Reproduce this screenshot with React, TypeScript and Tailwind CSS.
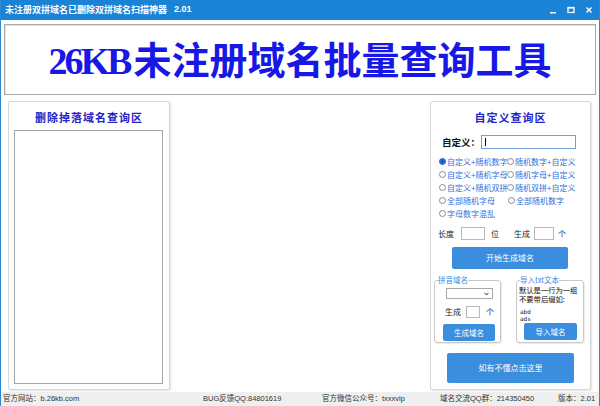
import React from "react";

const Radio: React.FC<{ checked?: boolean }> = ({ checked }) => (
  <span
    className={
      checked
        ? "w-[7px] h-[7px] shrink-0 rounded-full border border-[#2a62c9] bg-[#2f6fe0] flex items-center justify-center"
        : "w-[7px] h-[7px] shrink-0 rounded-full border border-[#8c8c8c] bg-white"
    }
  >
    {checked && <span className="w-[3px] h-[3px] rounded-full bg-[#1c4fb8]"></span>}
  </span>
);

const RadioItem: React.FC<{ label: string; checked?: boolean; className?: string }> = ({ label, checked, className }) => (
  <div className={"flex items-center gap-[1px] " + (className ?? "")}>
    <Radio checked={checked} />
    <span className="text-[8px] leading-[13px] text-[#2f6fe0] whitespace-nowrap">{label}</span>
  </div>
);

const App: React.FC = () => {
  return (
    <div className="w-[600px] h-[406px] flex flex-col border-x border-[#2a8ad8] bg-white overflow-hidden font-['Noto_Sans_CJK_SC',sans-serif]">
      {/* title bar */}
      <div className="h-[20px] shrink-0 bg-[#1b83d6] flex items-center pl-[4px] pr-[6px] text-white">
        <span className="text-[9px] font-bold whitespace-nowrap">未注册双拼域名已删除双拼域名扫描神器</span>
        <span className="ml-[7px] text-[9px] font-bold font-['Liberation_Sans',sans-serif]">2.01</span>
        <div className="ml-auto flex items-center gap-[10px]">
          <svg width="8" height="8" viewBox="0 0 8 8">
            <rect x="1" y="6" width="6" height="1.5" fill="white" />
          </svg>
          <svg width="8" height="8" viewBox="0 0 8 8">
            <rect x="1" y="1.5" width="6" height="5" fill="none" stroke="white" strokeWidth="1.3" />
            <rect x="1" y="1" width="6" height="1.5" fill="white" />
          </svg>
          <svg width="8" height="8" viewBox="0 0 8 8">
            <path d="M1.5 1.5 L6.5 6.5 M6.5 1.5 L1.5 6.5" stroke="white" strokeWidth="1.4" />
          </svg>
        </div>
      </div>

      {/* header */}
      <div className="mt-[4px] mx-[3px] h-[71px] shrink-0 border border-[#a9a9a9] shadow-[inset_1px_1px_0_#e4e4e4] flex items-center justify-center">
        <h1 className="text-[#1717e6] whitespace-nowrap flex items-baseline">
          <span className="text-[38px] tracking-[-3px] mr-[4px] font-bold font-['Liberation_Serif',serif]">26KB</span>
          <span className="text-[38px] font-semibold font-['Noto_Sans_CJK_SC',serif]">未注册域名批量查询工具</span>
        </h1>
      </div>

      {/* panels */}
      <div className="mt-[6px] h-[289px] shrink-0 flex justify-between pl-[7px] pr-[8px]">
        {/* left panel */}
        <div className="w-[162px] h-full border border-[#d6d6d6] rounded-[2px] shadow-[1px_1px_2px_rgba(0,0,0,0.12)] flex flex-col">
          <div className="h-[28px] pt-[3px] flex items-center justify-center">
            <span className="text-[11px] font-bold text-[#2323c8] tracking-[1px]">删除掉落域名查询区</span>
          </div>
          <div className="flex-1 ml-[5px] mr-[6px] mb-[5px] border border-[#a4a4a4]"></div>
        </div>

        {/* right panel */}
        <div className="w-[161px] h-full border border-[#d6d6d6] rounded-[2px] shadow-[1px_1px_2px_rgba(0,0,0,0.12)] flex flex-col">
          <div className="h-[28px] pt-[3px] flex items-center justify-center">
            <span className="text-[11px] font-bold text-[#2323c8] tracking-[1px]">自定义查询区</span>
          </div>

          <div className="mt-[5px] h-[14px] flex items-center pl-[11px]">
            <span className="w-[39px] text-[9.5px] font-bold text-[#111] whitespace-nowrap">自定义：</span>
            <div className="w-[95px] h-[14px] border border-[#6f9fd8] flex items-center pl-[3px]">
              <span className="w-[1px] h-[8px] bg-black"></span>
            </div>
          </div>

          <div className="mt-[6px] pl-[8px] flex flex-col">
            <div className="flex h-[13px]">
              <RadioItem checked label="自定义+随机数字" className="w-[68px]" />
              <RadioItem label="随机数字+自定义" />
            </div>
            <div className="flex h-[13px]">
              <RadioItem label="自定义+随机字母" className="w-[68px]" />
              <RadioItem label="随机字母+自定义" />
            </div>
            <div className="flex h-[13px]">
              <RadioItem label="自定义+随机双拼" className="w-[68px]" />
              <RadioItem label="随机双拼+自定义" />
            </div>
            <div className="flex h-[13px]">
              <RadioItem label="全部随机字母" className="w-[69px]" />
              <RadioItem label="全部随机数字" />
            </div>
            <div className="flex h-[13px]">
              <RadioItem label="字母数字混乱" />
            </div>
          </div>

          <div className="mt-[7px] h-[13px] flex items-center pl-[7px] text-[8px] text-[#222]">
            <span>长度</span>
            <span className="ml-[7px] w-[24px] h-[13px] border border-[#b8b8b8]"></span>
            <span className="ml-[6px]">位</span>
            <span className="ml-[15px]">生成</span>
            <span className="ml-[4px] w-[20px] h-[13px] border border-[#b8b8b8]"></span>
            <span className="ml-[4px]">个</span>
          </div>

          <button className="mt-[7px] ml-[21px] w-[116px] h-[22px] bg-[#3b8ede] rounded-[2px] text-white text-[8px] flex items-center justify-center">
            开始生成域名
          </button>

          <div className="mt-[6px] h-[68px] flex pl-[3px] gap-[15px]">
            <fieldset className="w-[67px] h-full border border-[#c8c8c8] rounded-[3px] shadow-[1px_1px_1px_rgba(0,0,0,0.08)] flex flex-col">
              <legend className="ml-[3px] text-[7.5px] leading-[10px] text-[#3b8ae0]">拼音域名</legend>
              <div className="mt-[3px] ml-[11px] w-[47px] h-[11px] border border-[#a8a8a8] flex items-center justify-end pr-[3px]">
                <svg width="5" height="4" viewBox="0 0 5 4">
                  <path d="M0.5 0.8 L2.5 3 L4.5 0.8" fill="none" stroke="#333" strokeWidth="1" />
                </svg>
              </div>
              <div className="mt-[7px] ml-[10px] h-[12px] flex items-center text-[8px] text-[#222]">
                <span>生成</span>
                <span className="ml-[5px] w-[14px] h-[12px] border border-[#b8b8b8]"></span>
                <span className="ml-[6px]">个</span>
              </div>
              <button className="mt-[6px] ml-[8px] w-[52px] h-[17px] bg-[#3b8ede] rounded-[2px] text-white text-[7.5px] flex items-center justify-center">
                生成域名
              </button>
            </fieldset>

            <fieldset className="w-[68px] h-full border border-[#c8c8c8] rounded-[3px] shadow-[1px_1px_1px_rgba(0,0,0,0.08)] flex flex-col">
              <legend className="ml-[3px] text-[7.5px] leading-[10px] text-[#3b8ae0] whitespace-nowrap">导入txt文本</legend>
              <div className="mt-[1px] ml-[2px] text-[7.3px] leading-[9px] text-[#111] whitespace-nowrap">
                <div>默认是一行为一组</div>
                <div>不要带后缀如:</div>
              </div>
              <div className="mt-[4px] ml-[3px] text-[6px] leading-[7px] text-[#222] font-['DejaVu_Sans_Mono',monospace]">
                <div>abd</div>
                <div>ads</div>
              </div>
              <button className="mt-[1px] ml-[7px] w-[53px] h-[17px] bg-[#3b8ede] rounded-[2px] text-white text-[7.5px] flex items-center justify-center">
                导入域名
              </button>
            </fieldset>
          </div>

          <button className="mt-[10px] ml-[16px] w-[127px] h-[30px] bg-[#3b8ede] rounded-[2px] text-white text-[8px] flex items-center justify-center">
            如有不懂点击这里
          </button>
        </div>
      </div>

      {/* status bar */}
      <div className="mt-auto h-[14px] bg-[#efefef] flex items-center text-[7.5px] text-[#333] whitespace-nowrap font-['Liberation_Sans','Noto_Sans_CJK_SC',sans-serif]">
        <span className="ml-[2px] w-[200px]">官方网站：b.26kb.com</span>
        <span className="w-[119px]">BUG反馈QQ:84801619</span>
        <span className="w-[118px]">官方微信公众号：txxxvip</span>
        <span className="w-[118px]">域名交流QQ群：214350450</span>
        <span>版本：2.01</span>
      </div>
    </div>
  );
};

export default App;
